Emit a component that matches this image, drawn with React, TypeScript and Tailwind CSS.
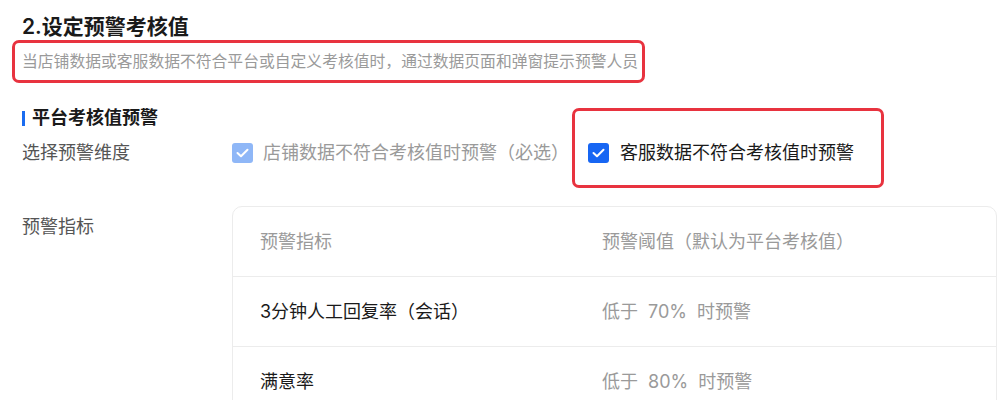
import React from 'react';

const font = { fontFamily: 'Inter, "Noto Sans CJK SC", sans-serif' };

// 勾选框
function CheckBox({ light }: { light?: boolean }) {
  return (
    <span
      className={`flex h-[20px] w-[21px] shrink-0 items-center justify-center rounded-[3px] ${
        light ? 'bg-[#8fb7f7]' : 'bg-[#1766f3]'
      }`}
    >
      <svg width="13" height="10" viewBox="0 0 13 10" fill="none">
        <polyline points="1.5,5 5,8.3 11.5,1.7" stroke="#fff" strokeWidth="2" strokeLinecap="round" strokeLinejoin="round" />
      </svg>
    </span>
  );
}

type Row = { name: string; value: string };

const rows: Row[] = [
  { name: '3分钟人工回复率（会话）', value: '70%' },
  { name: '满意率', value: '80%' },
];

export default function App() {
  return (
    <div className="h-[400px] w-[1008px] overflow-hidden bg-white pl-[12px] pt-[15px]" style={font}>
      {/* 标题 */}
      <div className="ml-[10px] text-[21px] font-semibold leading-[24px] text-[#1a1a1a]">2.设定预警考核值</div>
      <div className="mt-[1px] flex h-[43px] w-[633px] items-center whitespace-nowrap rounded-[7px] border-[3px] border-[#e8333f] pl-[7px] text-[15.8px] text-[#9a9a9a]">
        当店铺数据或客服数据不符合平台或自定义考核值时，通过数据页面和弹窗提示预警人员
      </div>

      {/* 平台考核值预警 */}
      <div className="ml-[10px] mt-[23px] flex h-[24px] items-center">
        <span className="mr-[7px] h-[15px] w-[3px] bg-[#1a6cf0]" />
        <span className="text-[18px] font-semibold leading-[24px] text-[#1a1a1a]">平台考核值预警</span>
      </div>

      <div className="ml-[10px] mt-[11px] flex h-[24px] items-center whitespace-nowrap text-[18px] leading-[24px]">
        <div className="w-[210px] shrink-0 text-[#555]">选择预警维度</div>
        <CheckBox light />
        <span className="ml-[10px] text-[#9a9a9a]">店铺数据不符合考核值时预警（必选）</span>
        <span className="relative ml-[19px] flex items-center">
          <span className="absolute -left-[16px] -top-[33px] h-[80px] w-[312px] rounded-[7px] border-[3px] border-[#e8333f]" />
          <CheckBox />
          <span className="ml-[11px] text-[#1a1a1a]">客服数据不符合考核值时预警</span>
        </span>
      </div>

      {/* 预警指标 */}
      <div className="ml-[10px] mt-[41px] flex items-start text-[18px] leading-[24px]">
        <div className="w-[210px] shrink-0 pt-[9px] text-[#555]">预警指标</div>
        <div className="w-[765px] rounded-[10px] border border-[#ececec]">
          <div className="flex h-[69px] items-center text-[#9a9a9a]">
            <div className="w-[369px] pl-[27px]">预警指标</div>
            <div>预警阈值（默认为平台考核值）</div>
          </div>
          {rows.map((row) => (
            <div key={row.name} className="flex h-[70px] items-center border-t border-[#ececec]">
              <div className="w-[369px] pl-[27px] text-[#1a1a1a]">{row.name}</div>
              <div className="text-[#9a9a9a]">
                低于<span className="mx-[10px]">{row.value}</span>时预警
              </div>
            </div>
          ))}
        </div>
      </div>
    </div>
  );
}
